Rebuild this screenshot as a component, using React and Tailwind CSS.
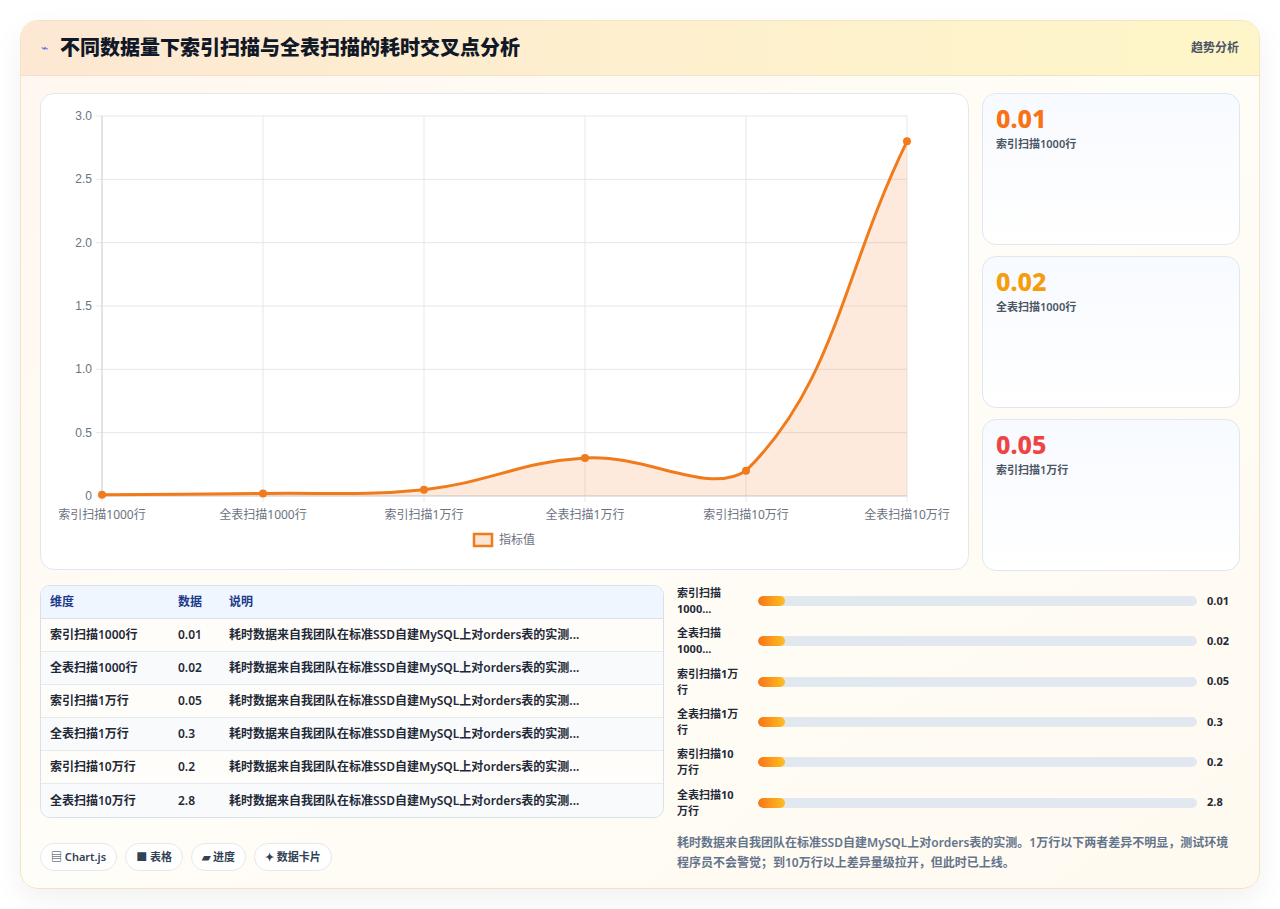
import React from "react";

const labels = ["索引扫描1000行","全表扫描1000行","索引扫描1万行","全表扫描1万行","索引扫描10万行","全表扫描10万行"];
const vals = [0.01,0.02,0.05,0.3,0.2,2.8];
const barLabels = ["索引扫描\n1000...","全表扫描\n1000...","索引扫描1万\n行","全表扫描1万\n行","索引扫描10\n万行","全表扫描10\n万行"];
const note = "耗时数据来自我团队在标准SSD自建MySQL上对orders表的实测...";
const font = { fontFamily: '"Noto Sans","Noto Sans CJK SC",sans-serif' };

function Chart() {
  const x0 = 61, x1 = 866, y0 = 402, yTop = 22;
  const xs = labels.map((_, i) => x0 + (i * (x1 - x0)) / 5);
  const Y = v => y0 - (v / 3) * (y0 - yTop);
  const pts = xs.map((x, i) => [x, Y(vals[i])]);
  const t = 0.4;
  const cps = pts.map((p1, i) => {
    const p0 = pts[i - 1] || p1, p2 = pts[i + 1] || p1;
    const d01 = Math.hypot(p1[0] - p0[0], p1[1] - p0[1]);
    const d12 = Math.hypot(p2[0] - p1[0], p2[1] - p1[1]);
    const s = d01 + d12 || 1;
    const fa = (t * d01) / s, fb = (t * d12) / s;
    const clamp = y => Math.min(y0, Math.max(yTop, y));
    return {
      prev: [p1[0] - fa * (p2[0] - p0[0]), clamp(p1[1] - fa * (p2[1] - p0[1]))],
      next: [p1[0] + fb * (p2[0] - p0[0]), clamp(p1[1] + fb * (p2[1] - p0[1]))],
    };
  });
  let d = `M${pts[0][0]},${pts[0][1]}`;
  for (let i = 0; i < pts.length - 1; i++) {
    const c1 = cps[i].next, c2 = cps[i + 1].prev, p2 = pts[i + 1];
    d += ` C${c1[0]},${c1[1]} ${c2[0]},${c2[1]} ${p2[0]},${p2[1]}`;
  }
  const ticks = [0, 0.5, 1, 1.5, 2, 2.5, 3];
  return (
    <svg width="926" height="474" style={{ fontFamily: '"Liberation Sans",sans-serif' }}>
      {ticks.map(v => (
        <g key={v}>
          <line x1={x0 - 6} x2={x1} y1={Y(v)} y2={Y(v)} stroke="#e5e7eb" />
          <text x={x0 - 10} y={Y(v) + 4} fontSize="12" fill="#6b7280" textAnchor="end">{v === 0 ? "0" : v.toFixed(1)}</text>
        </g>
      ))}
      {xs.map((x, i) => (
        <g key={i}>
          <line x1={x} x2={x} y1={yTop} y2={y0 + 6} stroke="#e5e7eb" />
          <text x={x} y={y0 + 23} fontSize="12" fill="#6b7280" textAnchor="middle" style={font}>{labels[i]}</text>
        </g>
      ))}
      <line x1={x0} x2={x0} y1={yTop} y2={y0} stroke="#d1d5db" />
      <line x1={x0} x2={x1} y1={y0} y2={y0} stroke="#d1d5db" />
      <path d={`${d} L${x1},${y0} L${x0},${y0} Z`} fill="#f97316" fillOpacity="0.15" />
      <path d={d} fill="none" stroke="#f07b1c" strokeWidth="3" />
      {pts.map((p, i) => <circle key={i} cx={p[0]} cy={p[1]} r="4" fill="#f07b1c" />)}
      <rect x="433" y="440" width="18" height="12" fill="#fde5d3" stroke="#f07b1c" strokeWidth="2.5" />
      <text x="458" y="450" fontSize="12" fill="#6b7280" style={font}>指标值</text>
    </svg>
  );
}

export default function App() {
  const stats = [["0.01", "text-[#f97316]", "索引扫描1000行"], ["0.02", "text-[#f59e0b]", "全表扫描1000行"], ["0.05", "text-[#ef4444]", "索引扫描1万行"]];
  return (
    <div className="w-[1280px] h-[909px] bg-white p-[20px]" style={font}>
      <div className="rounded-[18px] border border-[#f5e3c3] bg-gradient-to-br from-[#fff7ef] via-[#fffdf7] to-[#fffaf0] overflow-hidden shadow-[0_10px_30px_rgba(0,0,0,0.06)] h-[869px]">
        <div className="h-[55px] flex items-center justify-between px-[20px] bg-gradient-to-r from-[#fde8d3] to-[#fef6c8] border-b border-[#f0e3cc]">
          <div className="flex items-center gap-[12px]">
            <span className="text-[12px] text-[#4f6fd9]">⌁</span>
            <span className="text-[20px] font-extrabold text-[#111827]">不同数据量下索引扫描与全表扫描的耗时交叉点分析</span>
          </div>
          <span className="text-[12px] font-semibold text-[#4b5563]">趋势分析</span>
        </div>
        <div className="px-[19px] pt-[17px]">
          <div className="flex gap-[13px]">
            <div className="w-[929px] h-[477px] bg-white rounded-[14px] border border-[#e5e7eb]">
              <Chart />
            </div>
            <div className="flex-1 flex flex-col gap-[11px]">
              {stats.map(([v, c, l]) => (
                <div key={l} className="h-[152px] rounded-[14px] border border-[#dfe7f1] bg-gradient-to-b from-[#f7faff] to-white px-[13px] pt-[8px]">
                  <div className={`text-[25px] font-extrabold leading-[32px] ${c}`}>{v}</div>
                  <div className="text-[11px] font-semibold text-[#4b5563] mt-[2px]">{l}</div>
                </div>
              ))}
            </div>
          </div>
          <div className="flex gap-[13px] mt-[14px]">
            <div className="w-[624px]">
              <div className="rounded-[10px] border border-[#d7e0ec] overflow-hidden bg-white text-[12px] font-semibold">
                <div className="h-[33px] flex items-center bg-[#eff6ff] border-b border-[#d7e0ec] text-[#1e3a8a]">
                  <div className="w-[137px] pl-[9px]">维度</div><div className="w-[51px]">数据</div><div>说明</div>
                </div>
                {labels.map((l, i) => (
                  <div key={l} className={`h-[33px] flex items-center text-[#1f2937] ${i < 5 ? "border-b border-[#e5eaf1]" : ""} ${i % 2 ? "bg-[#f8fafc]" : "bg-[#fffdf9]"}`}>
                    <div className="w-[137px] pl-[9px]">{l}</div><div className="w-[51px]">{vals[i]}</div><div>{note}</div>
                  </div>
                ))}
              </div>
              <div className="flex gap-[8px] mt-[25px]">
                {["▤ Chart.js", "■ 表格", "▰ 进度", "✦ 数据卡片"].map(c => (
                  <span key={c} className="h-[28px] px-[10px] flex items-center rounded-full border border-[#e5e7eb] bg-white text-[11px] font-semibold text-[#334155]">{c}</span>
                ))}
              </div>
            </div>
            <div className="flex-1 -mt-[4px]">
              <div className="flex flex-col">
                {barLabels.map((l, i) => (
                  <div key={i} className="h-[40.3px] flex items-center">
                    <div className="w-[81px] text-[11px] font-bold text-[#1f2937] leading-[16px] whitespace-pre-line">{l}</div>
                    <div className="w-[439px] h-[10px] rounded-full bg-[#e2e8f0] overflow-hidden">
                      <div className="w-[27px] h-full rounded-full bg-gradient-to-r from-[#f97316] to-[#fbbf24]" />
                    </div>
                    <div className="ml-[10px] text-[11px] font-bold text-[#1f2937]">{vals[i]}</div>
                  </div>
                ))}
              </div>
              <p className="mt-[10px] text-[12px] font-semibold leading-[20px] text-[#64748b] pr-[4px]">耗时数据来自我团队在标准SSD自建MySQL上对orders表的实测。1万行以下两者差异不明显，测试环境程序员不会警觉；到10万行以上差异量级拉开，但此时已上线。</p>
            </div>
          </div>
        </div>
      </div>
    </div>
  );
}
